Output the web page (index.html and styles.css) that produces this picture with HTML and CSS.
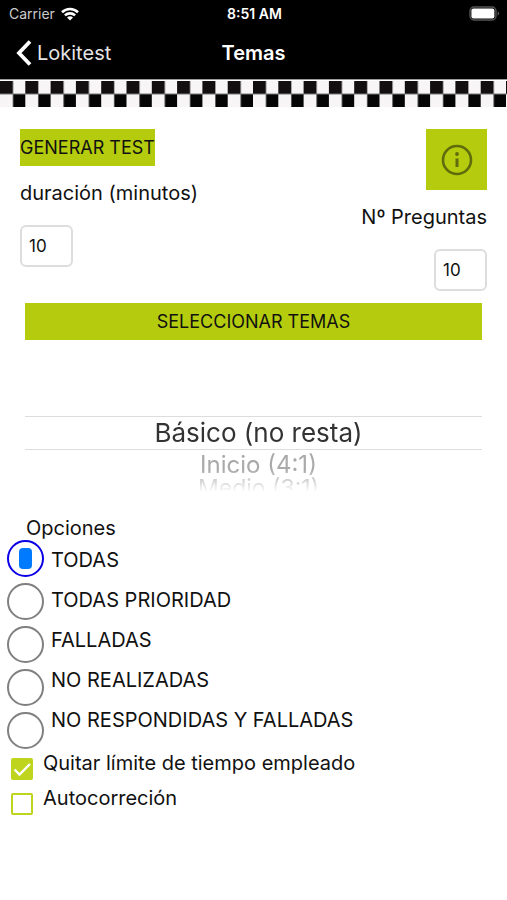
FILE: index.html
```html
<!DOCTYPE html>
<html lang="es">
<head>
    <meta charset="UTF-8">
    <meta name="viewport" content="width=device-width, initial-scale=1.0">
    <title>Temas</title>
    <link rel="stylesheet" href="styles.css">
</head>
<body>

    <!-- Header -->
    <header class="header">
        <div class="status-bar">
            <div class="carrier">
                <span>Carrier</span>
                <svg width="18" height="14" viewBox="0 0 18 14" fill="none" stroke="#fff" stroke-width="2.6">
                    <path d="M1 5.2a11.6 11.6 0 0 1 16 0"/>
                    <path d="M3.9 8.4a7.4 7.4 0 0 1 10.2 0"/>
                    <path d="M9 13.6L6 10.6a4.3 4.3 0 0 1 6 0z" fill="#fff" stroke="none"/>
                </svg>
            </div>
            <div class="time">8:51 AM</div>
            <div class="battery">
                <svg width="31" height="15" viewBox="0 0 31 15">
                    <rect x="1" y="1" width="26" height="13" rx="4" fill="none" stroke="#555" stroke-width="1.4"/>
                    <rect x="2.4" y="2.6" width="23" height="9.8" rx="2" fill="#fff"/>
                    <path d="M28.6 5.2v4.6q1.6-.8 1.6-2.3t-1.6-2.3z" fill="#555"/>
                </svg>
            </div>
        </div>
        <nav class="nav-bar">
            <a class="back-link" href="#">
                <svg width="16" height="26" viewBox="0 0 16 26" fill="none" stroke="#fff" stroke-width="3.8">
                    <path d="M14 1.5L3 13l11 11.5"/>
                </svg>
                Lokitest
            </a>
            <h1 class="nav-title">Temas</h1>
        </nav>
    </header>

    <!-- Taxi strip -->
    <svg class="checker" aria-hidden="true">
        <defs>
            <pattern id="squares" width="25.3" height="26" x="0" y="2" patternUnits="userSpaceOnUse">
                <rect width="25.3" height="26" fill="#f7f5f6"/>
                <rect width="13" height="13" fill="#130f10"/>
                <rect x="13" y="13" width="12.3" height="13" fill="#050505"/>
                <path d="M0 13h25.3" stroke="#777" stroke-width="1"/>
            </pattern>
        </defs>
        <rect y="2" width="100%" height="26" fill="url(#squares)"/>
        <rect width="100%" height="1" fill="#999"/>
    </svg>

    <main>
        <form class="test-form">
            <div class="test-setup">
                <div class="setup-column">
                    <button type="button" class="green-button">GENERAR TEST</button>
                    <label class="field-label" for="duracion">duración (minutos)</label>
                    <input class="number-input" type="text" inputmode="numeric" id="duracion" value="10">
                </div>
                <div class="setup-column right">
                    <button type="button" class="green-button info-button" aria-label="Info">
                        <svg width="32" height="32" viewBox="0 0 32 32" fill="none" stroke="#5f6b0c" stroke-width="2.6">
                            <circle cx="16" cy="16" r="14"/>
                            <path d="M16 14.5v8.5" stroke-width="3"/>
                            <circle cx="16" cy="10" r="1.9" fill="#5f6b0c" stroke="none"/>
                        </svg>
                    </button>
                    <label class="field-label" for="preguntas">Nº Preguntas</label>
                    <input class="number-input" type="text" inputmode="numeric" id="preguntas" value="10">
                </div>
            </div>

            <div class="topics">
                <button type="button" class="green-button">SELECCIONAR TEMAS</button>
                <!-- Difficulty wheel -->
                <select class="picker" size="4" aria-label="Dificultad">
                    <option class="level" selected>Básico (no resta)</option>
                    <option class="level next">Inicio (4:1)</option>
                    <option class="level last">Medio (3:1)</option>
                </select>
            </div>

            <!-- Question filter -->
            <fieldset class="options">
                <legend class="options-title">Opciones</legend>
                <div class="options-body">
                    <div class="radio-column">
                        <input type="radio" name="opcion" id="todas" checked>
                        <input type="radio" name="opcion" id="prioridad">
                        <input type="radio" name="opcion" id="falladas">
                        <input type="radio" name="opcion" id="no-realizadas">
                        <input type="radio" name="opcion" id="no-respondidas">
                    </div>
                    <div class="radio-labels">
                        <label for="todas">TODAS</label>
                        <label for="prioridad">TODAS PRIORIDAD</label>
                        <label for="falladas">FALLADAS</label>
                        <label for="no-realizadas">NO REALIZADAS</label>
                        <label for="no-respondidas">NO RESPONDIDAS Y FALLADAS</label>
                    </div>
                </div>
            </fieldset>

            <div class="checks">
                <div class="check-row">
                    <span class="check-box">
                        <input type="checkbox" id="limite" checked>
                        <svg class="tick" width="22" height="22" viewBox="0 0 22 22" fill="none" stroke="#fff" stroke-width="2.4">
                            <path d="M3.5 11.5l5 5L19 6"/>
                        </svg>
                    </span>
                    <label for="limite">Quitar límite de tiempo empleado</label>
                </div>
                <div class="check-row">
                    <span class="check-box">
                        <input type="checkbox" id="autocorreccion">
                    </span>
                    <label for="autocorreccion">Autocorreción</label>
                </div>
            </div>
        </form>
    </main>

</body>
</html>
```
FILE: styles.css
```css
* {
    box-sizing: border-box;
}

body {
    margin: 0;
    background-color: #fff;
    color: #111;
    font-family: Inter, "Liberation Sans", sans-serif;
    font-size: 20px;
}

/* Header */
.header {
    background-color: #000;
    color: #fff;
}

.status-bar {
    display: grid;
    grid-template-columns: 1fr auto 1fr;
    align-items: center;
    height: 27px;
    padding: 0 7px 0 9px;
    font-size: 14px;
}

.carrier {
    display: flex;
    align-items: center;
    gap: 6px;
    color: #ccc;
}

.time {
    font-weight: 600;
}

.battery {
    display: flex;
    justify-content: flex-end;
}

.nav-bar {
    display: grid;
    grid-template-columns: 1fr auto 1fr;
    align-items: center;
    height: 52px;
    padding: 0 16px;
}

.back-link {
    display: flex;
    align-items: center;
    gap: 5px;
    color: #e4e4e4;
    text-decoration: none;
}

.nav-title {
    margin: 0;
    font-size: 20px;
    font-weight: 600;
}

.checker {
    display: block;
    width: 100%;
    height: 28px;
}

/* Test setup */
.test-setup {
    display: flex;
    justify-content: space-between;
    padding: 22px 20px 12px;
}

.setup-column {
    display: flex;
    flex-direction: column;
    align-items: flex-start;
}

.setup-column.right {
    align-items: flex-end;
}

.green-button {
    height: 37px;
    padding: 0;
    border: none;
    background-color: #b5cc0e;
    color: #111;
    font-family: inherit;
    font-size: 18px;
    cursor: pointer;
}

.info-button {
    display: flex;
    align-items: center;
    justify-content: center;
    width: 61px;
    height: 61px;
}

.field-label {
    margin: 12px 0 17px;
    line-height: 30px;
}

.number-input {
    width: 53px;
    height: 42px;
    padding: 0 7px;
    border: 2px solid #ddd;
    border-radius: 6px;
    background-color: #fff;
    color: #111;
    font-family: inherit;
    font-size: 17px;
}

/* Topics and difficulty */
.topics {
    display: flex;
    flex-direction: column;
    padding: 0 25px;
}

.picker {
    appearance: none;
    width: 100%;
    height: 152px;
    padding: 76px 0 0;
    border: none;
    outline: none;
    overflow: hidden;
    background-color: transparent;
    font-family: inherit;
    text-align: center;
    mask-image: linear-gradient(#000 130px, transparent 152px);
}

.level {
    height: 34px;
    min-height: 0;
    padding: 0 0 0 10px;
    border-top: 1px solid #ddd;
    border-bottom: 1px solid #ddd;
    color: #333;
    font-size: 26px;
    line-height: 32px;
}

.level:checked {
    background: linear-gradient(#fff, #fff);
    color: #333;
}

.level.next {
    height: 24px;
    border: none;
    color: #aaa;
    font-size: 24px;
    line-height: 24px;
}

.level.last {
    height: 24px;
    border: none;
    color: #aaa;
    font-size: 23px;
    line-height: 24px;
}

/* Question filter */
.options {
    min-width: 0;
    margin: 0;
    padding: 24px 7px 0;
    border: none;
}

.options-title {
    float: left;
    width: 100%;
    padding: 0 19px;
    line-height: 24px;
}

.options-body {
    display: flex;
    clear: both;
    gap: 7px;
}

.radio-column {
    display: flex;
    flex-direction: column;
    gap: 6px;
}

.radio-column input {
    appearance: none;
    display: flex;
    align-items: center;
    justify-content: center;
    width: 37px;
    height: 37px;
    margin: 0;
    border: 2px solid #808080;
    border-radius: 50%;
}

.radio-column input:checked {
    border-color: #0b00e6;
}

.radio-column input:checked::before {
    content: "";
    width: 13px;
    height: 21px;
    border-radius: 4px;
    background-color: #007aff;
}

.radio-labels {
    display: flex;
    flex-direction: column;
    line-height: 40px;
}

/* Check boxes */
.checks {
    padding: 0 11px;
}

.check-row {
    display: flex;
    gap: 10px;
    height: 35px;
    line-height: 28px;
}

.check-box {
    position: relative;
    height: 22px;
    margin-top: 9px;
}

.check-box input {
    appearance: none;
    display: block;
    width: 22px;
    height: 22px;
    margin: 0;
    border: 2px solid #bfd41c;
    border-radius: 2px;
}

.check-box input:checked {
    background-color: #bfd41c;
}

.tick {
    position: absolute;
    top: 0;
    left: 0;
    pointer-events: none;
}
```
